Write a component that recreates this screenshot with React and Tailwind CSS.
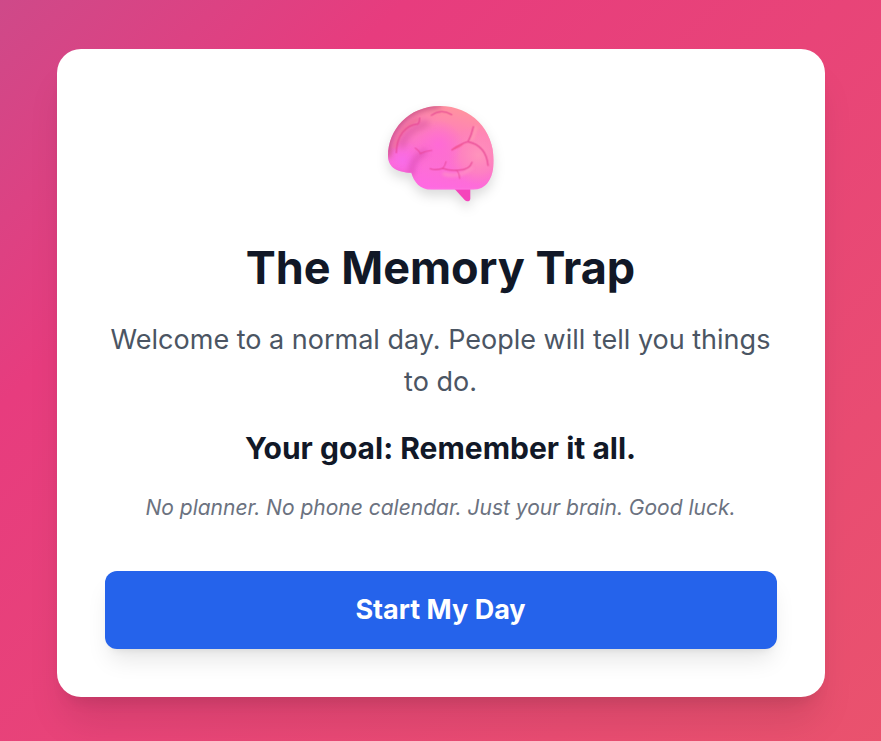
const BrainIcon = () => {
  return (
    <svg
      viewBox="33 21 360 324"
      className="w-[120px] h-[108px] overflow-visible drop-shadow-[0_6px_6px_rgba(0,0,0,0.14)]"
      role="img"
      aria-label="Brain"
    >
      <defs>
        <linearGradient id="base" x1="0.72" y1="0" x2="0.38" y2="1">
          <stop offset="0" stopColor="#ff9898" />
          <stop offset="0.28" stopColor="#ff85b2" />
          <stop offset="0.58" stopColor="#fc72cc" />
          <stop offset="1" stopColor="#ff68e4" />
        </linearGradient>
        <radialGradient id="rightGlow" cx="325" cy="195" r="90" gradientUnits="userSpaceOnUse">
          <stop offset="0" stopColor="#ff94bc" />
          <stop offset="0.6" stopColor="#ff8aba" stopOpacity="0.6" />
          <stop offset="1" stopColor="#ff80c0" stopOpacity="0" />
        </radialGradient>
        <radialGradient id="leftGlow" cx="98" cy="212" r="60" gradientUnits="userSpaceOnUse">
          <stop offset="0" stopColor="#f86ce8" />
          <stop offset="1" stopColor="#fb68e4" stopOpacity="0" />
        </radialGradient>
        <radialGradient id="centerGlow" cx="205" cy="165" r="75" gradientUnits="userSpaceOnUse">
          <stop offset="0" stopColor="#ff6ad6" />
          <stop offset="1" stopColor="#ff6ad6" stopOpacity="0" />
        </radialGradient>
        <filter id="soft" x="-50%" y="-50%" width="200%" height="200%">
          <feGaussianBlur stdDeviation="10" />
        </filter>
        <filter id="softer" x="-50%" y="-50%" width="200%" height="200%">
          <feGaussianBlur stdDeviation="4" />
        </filter>
        <clipPath id="outline">
          <path d="M54 197C54 120 115 48 210 48C305 48 371 120 371 210C371 266 350 299 308 299H184C150 299 131 275 124 248C82 247 54 232 54 197Z" />
        </clipPath>
      </defs>

      {/* stem */}
      <path d="M254 297H301V326Q300 334 292 334Q288 334 284 330Z" fill="#f545bb" />

      <g clipPath="url(#outline)">
        <rect x="50" y="40" width="330" height="265" fill="url(#base)" />
        <rect x="50" y="40" width="330" height="265" fill="url(#rightGlow)" />
        <rect x="50" y="40" width="330" height="265" fill="url(#leftGlow)" />
        <rect x="50" y="40" width="330" height="265" fill="url(#centerGlow)" />

        {/* shaded folds */}
        <g fill="none" strokeLinecap="round" filter="url(#soft)">
          <path d="M50 190C50 120 110 48 200 42" stroke="#cc5488" strokeWidth="26" />
          <path d="M96 165C104 130 130 115 168 100" stroke="#dc5aa4" strokeWidth="20" opacity="0.75" />
          <path d="M124 252C124 220 140 198 165 186" stroke="#d344a8" strokeWidth="14" opacity="0.75" />
          <path d="M60 240Q90 256 125 252" stroke="#e04ab0" strokeWidth="9" opacity="0.6" />
        </g>
        <g fill="none" strokeLinecap="round" filter="url(#softer)">
          <path d="M74 170C84 130 108 104 142 88" stroke="#ef7099" strokeWidth="13" opacity="0.8" />
          <path d="M222 252Q270 264 304 234" stroke="#ff94c4" strokeWidth="10" opacity="0.7" />
          <path d="M318 112Q312 136 304 148" stroke="#ffa4b4" strokeWidth="8" opacity="0.7" />
          <path d="M160 302H330" stroke="#ffa0ec" strokeWidth="5" opacity="0.7" />
        </g>

        {/* creases */}
        <g fill="none" stroke="#e5408f" strokeLinecap="round" strokeWidth="4.5" opacity="0.65">
          <path d="M79 188C80 138 106 105 143 102Q149 98 149 84" />
          <path d="M184 76Q213 55 245 74" />
          <path d="M136 174Q146 180 151 191Q164 183 185 181" strokeWidth="3.5" />
          <path d="M310 111Q304 137 294 155C326 162 350 184 354 226" strokeWidth="5" />
          <path d="M294 155Q272 161 246 180" />
          <path d="M181 236Q196 242 218 235Q240 243 266 240Q298 240 306 217" />
          <path d="M218 235Q225 228 228 215M258 240Q267 244 269 265" strokeWidth="3.5" />
        </g>
        <path d="M242 181Q254 166 282 160Q272 175 242 181Z" fill="#f3568f" opacity="0.7" />
      </g>
    </svg>
  );
};

const App = () => {
  return (
    <main className="min-h-screen flex items-center justify-center px-6 pt-[49px] pb-11 font-['Inter',sans-serif] bg-[linear-gradient(-45deg,#ee7752,#e73c7e,#23a6d5,#23d5ab)] bg-[length:600%_600%] bg-[position:96%_50%]">
      <div className="w-full max-w-3xl bg-white rounded-3xl p-12 text-center shadow-[0_30px_38px_-8px_rgba(0,0,0,0.1),0_12px_15px_-9px_rgba(0,0,0,0.1)]">
        <div className="flex justify-center mb-9">
          <BrainIcon />
        </div>
        <h1 className="text-[45px] leading-[54px] font-bold text-[#111827] mb-6">
          The Memory Trap
        </h1>
        <p className="text-[27px] leading-[42px] text-[#4b5563] mb-6">
          Welcome to a normal day. People will tell you things to do.
        </p>
        <p className="text-[30px] leading-[42px] font-bold text-[#111827] mb-6">
          Your goal: Remember it all.
        </p>
        <p className="text-[21px] leading-[30px] italic text-[#6b7280] mb-12">
          No planner. No phone calendar. Just your brain. Good luck.
        </p>
        <button
          type="button"
          className="w-full rounded-xl bg-[#2563eb] py-[18px] text-[27px] leading-[42px] font-bold text-white cursor-pointer shadow-[0_15px_23px_-5px_rgba(0,0,0,0.1),0_6px_9px_-6px_rgba(0,0,0,0.1)]"
        >
          Start My Day
        </button>
      </div>
    </main>
  );
};

export default App;
